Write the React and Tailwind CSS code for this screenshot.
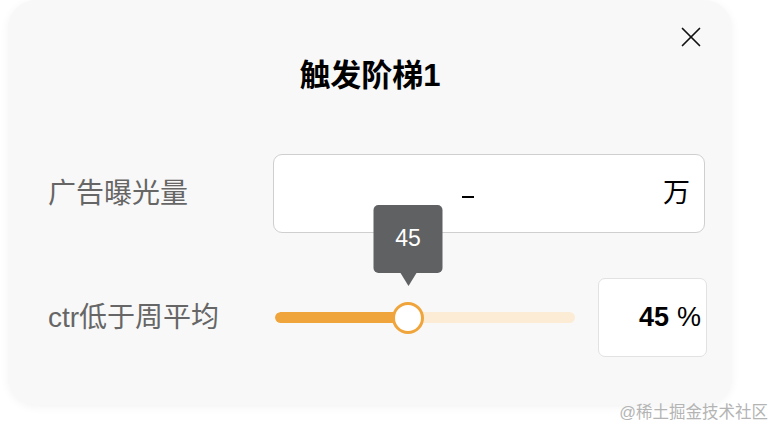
import { X } from 'lucide-react';

const font = { fontFamily: '"Liberation Sans", "Noto Sans CJK SC", sans-serif' };

const Slider = ({ value }) => {
  // track is 300px wide; thumb sits at value% of it
  const left = Math.round((value / 100) * 296);
  return (
    <div className="relative shrink-0 w-[300px] h-[32px] flex items-center">
      <div className="w-full h-[11px] rounded-full bg-[#fcecd5] overflow-hidden">
        <div className="h-full bg-[#f0a53c] rounded-full" style={{ width: left + 6 }} />
      </div>
      <div
        className="absolute top-0 w-[32px] h-[32px] -ml-[16px] rounded-full bg-white border-[3px] border-[#f0a53c]"
        style={{ left }}
      >
        <div className="absolute left-1/2 -translate-x-1/2 bottom-[45px] flex flex-col items-center">
          <div className="w-[69px] h-[68px] rounded-[5px] bg-[#5f6162] text-white text-[23px] flex items-center justify-center">
            {value}
          </div>
          <div className="w-0 h-0 border-l-[8px] border-r-[8px] border-t-[13px] border-l-transparent border-r-transparent border-t-[#5f6162]" />
        </div>
      </div>
    </div>
  );
};

export default function App() {
  return (
    <div className="relative w-[782px] h-[436px] bg-white overflow-hidden" style={font}>
      <div className="pl-2">
        <div className="relative w-[724px] h-[405px] rounded-[28px] bg-[#f8f8f8] shadow-[0_2px_10px_rgba(0,0,0,0.05)] pl-[40px] pr-[27px] pt-[58px]">
          <button className="absolute top-[20px] right-[24px] text-[#111]">
            <X className="w-[34px] h-[34px]" strokeWidth={1.2} />
          </button>
          <h1 className="text-center text-[31px] leading-[36px] font-bold text-black ml-[-40px] mr-[-27px]">
            触发阶梯1
          </h1>

          <div className="flex items-center mt-[60px]">
            <div className="w-[225px] shrink-0 text-[28px] text-[#666]">广告曝光量</div>
            <div className="relative flex-1 h-[79px] rounded-[9px] border border-[#cfcfcf] bg-white flex items-center justify-end pr-[14px]">
              <div className="absolute left-[188px] top-[41px] w-[12px] h-[2px] bg-black" />
              <span className="text-[27px] text-black">万</span>
            </div>
          </div>

          <div className="flex items-center mt-[45px]">
            <div className="w-[227px] shrink-0 text-[28px] text-[#666]">ctr低于周平均</div>
            <Slider value={45} />
            <div className="ml-[23px] shrink-0 w-[109px] h-[79px] rounded-[7px] border border-[#e2e2e2] bg-white flex items-center justify-end pr-[5px] text-[27px] text-black">
              <span className="font-bold">45</span>
              <span className="ml-[8px]">%</span>
            </div>
          </div>
        </div>
      </div>
      <div className="absolute right-[14px] top-[400px] text-[16.5px] text-[#b4b4b4]">@稀土掘金技术社区</div>
    </div>
  );
}
